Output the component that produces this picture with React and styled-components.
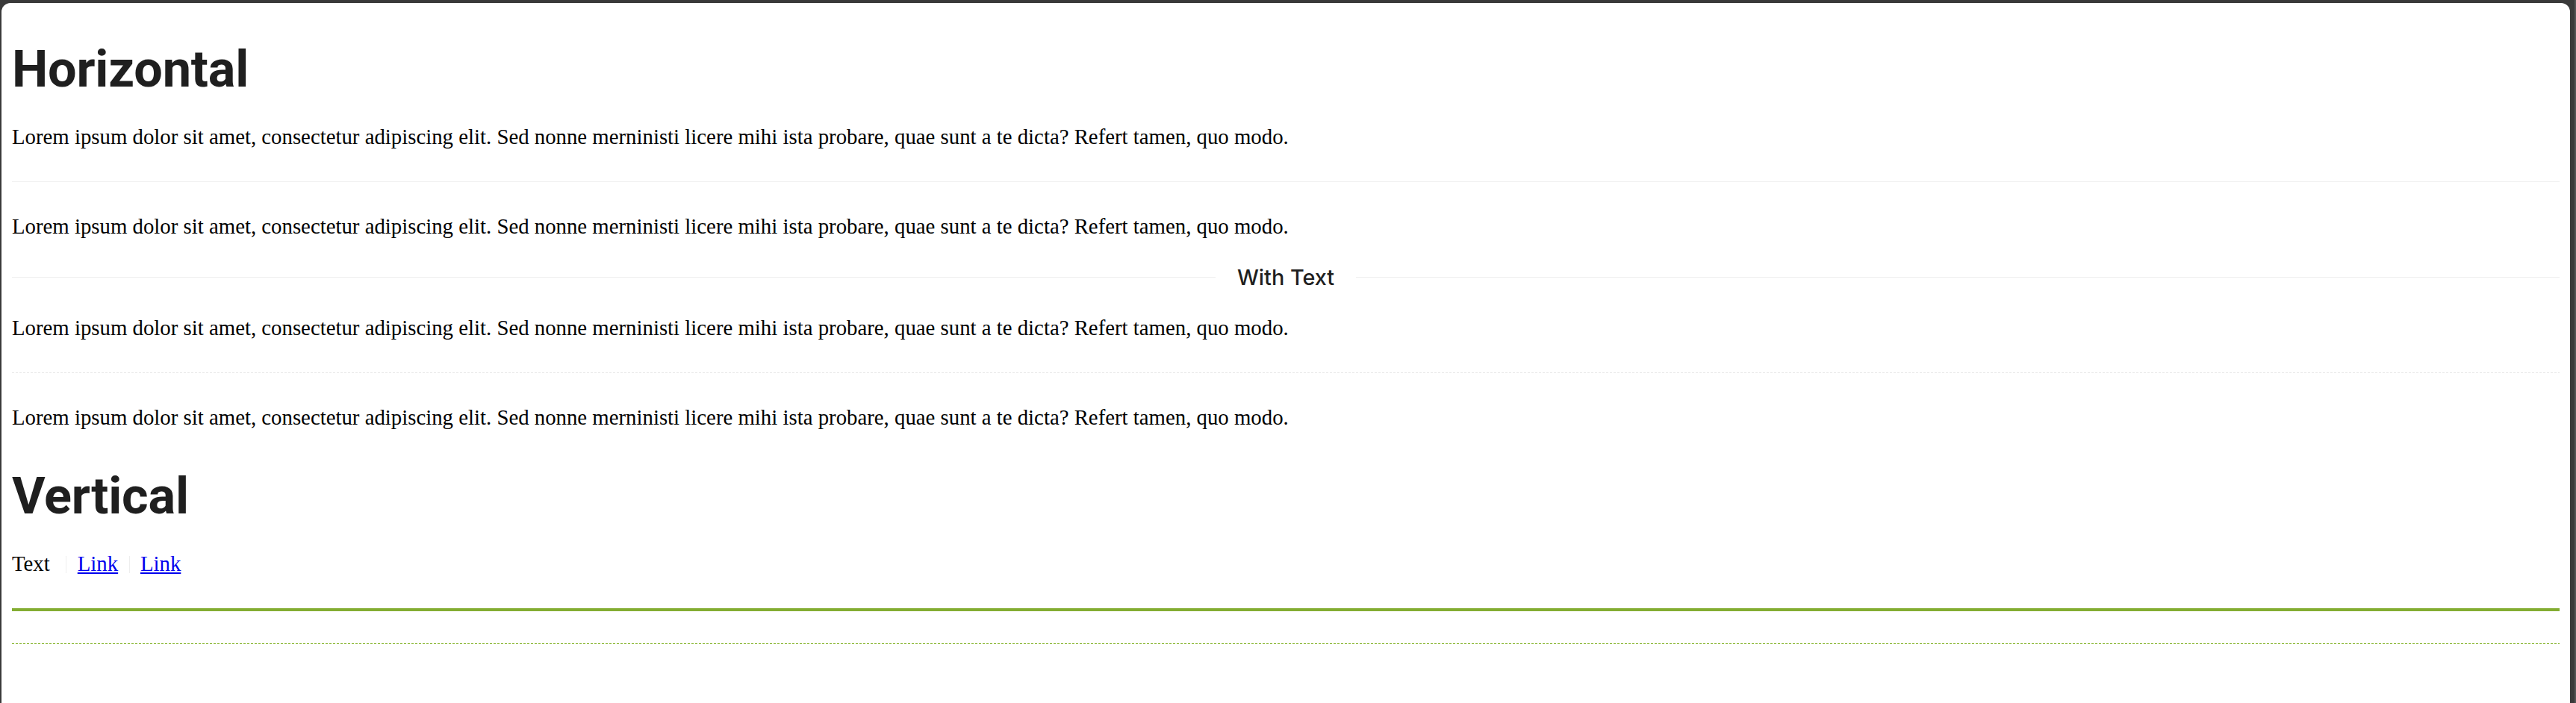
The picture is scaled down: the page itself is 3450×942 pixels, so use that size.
import React from "react";
import styled, { createGlobalStyle, css } from "styled-components";

const GlobalStyle = createGlobalStyle`
  html, body {
    margin: 0;
    padding: 0;
    background: #3a3a3a;
  }
  body {
    font-family: "Liberation Serif", "Times New Roman", serif;
  }
`;

const Shell = styled.div`
  display: flex;
  min-height: 942px;
  box-sizing: border-box;
  padding: 4px 0 0 2px;
  background: #3a3a3a;
  border-right: 2px solid #555555;
`;

const Window = styled.main`
  flex: 1;
  display: flow-root;
  margin-right: 6px;
  padding: 0 14px;
  background: #ffffff;
  border-radius: 12px 12px 0 0;
  color: #000;
  font-family: "Liberation Serif", "Times New Roman", serif;
  font-size: 28.8px;
`;

const Title = styled.h1`
  margin: ${(p) => p.$top}px 0 31.7px;
  font-family: Roboto, Inter, "Noto Sans", sans-serif;
  font-size: 68.4px;
  line-height: 82.8px;
  font-weight: 700;
  letter-spacing: -0.2px;
  color: #1f1f1f;
`;

const Paragraph = styled.p`
  margin: 28.8px 0;
  font-size: 28.8px;
  line-height: 33px;
`;

const Divider = styled.div`
  margin: 43.2px 0;
  height: ${(p) => p.$thickness || 1}px;
  ${(p) =>
    p.$dashed
      ? css`
          background: repeating-linear-gradient(
            90deg,
            ${p.$color} 0 3px,
            transparent 3px 5px
          );
        `
      : css`
          background: ${p.$color};
        `}
`;

const TextDivider = styled.div`
  display: flex;
  align-items: center;
  margin: 28.8px 0;
  height: 45.3px;
  font-family: Inter, "Noto Sans", sans-serif;
  font-size: 28.8px;
  line-height: 45.3px;
  font-weight: 500;
  color: #1f1f1f;
`;

const DividerLine = styled.span`
  flex: 1;
  height: 1px;
  background: #eeeeee;
`;

const DividerLabel = styled.span`
  padding: 0 28.8px;
  white-space: nowrap;
`;

const InlineRow = styled.div`
  font-size: 28.8px;
  line-height: 33px;
`;

const VDivider = styled.span`
  display: inline-block;
  width: 1px;
  height: 22.7px;
  margin: 0 14.4px;
  vertical-align: -3px;
  background: #eeeeee;
`;

const Link = styled.a`
  color: #0000ee;
  text-decoration: underline;
`;

const lorem =
  "Lorem ipsum dolor sit amet, consectetur adipiscing elit. Sed nonne merninisti licere mihi ista probare, quae sunt a te dicta? Refert tamen, quo modo.";

export default function App() {
  return (
    <>
      <GlobalStyle />
      <Shell>
        <Window>
          <Title $top={48.25}>Horizontal</Title>
          <Paragraph>{lorem}</Paragraph>
          <Divider $color="#efefef" />
          <Paragraph>{lorem}</Paragraph>
          <TextDivider>
            <DividerLine />
            <DividerLabel>With Text</DividerLabel>
            <DividerLine />
          </TextDivider>
          <Paragraph>{lorem}</Paragraph>
          <Divider $dashed $color="#e6e6e6" />
          <Paragraph>{lorem}</Paragraph>
          <Title $top={47.75}>Vertical</Title>
          <InlineRow>
            Text <VDivider />
            <Link href="#">Link</Link>
            <VDivider />
            <Link href="#">Link</Link>
          </InlineRow>
          <Divider $thickness={4} $color="#83ad32" />
          <Divider $dashed $thickness={1} $color="#84b42a" />
        </Window>
      </Shell>
    </>
  );
}
